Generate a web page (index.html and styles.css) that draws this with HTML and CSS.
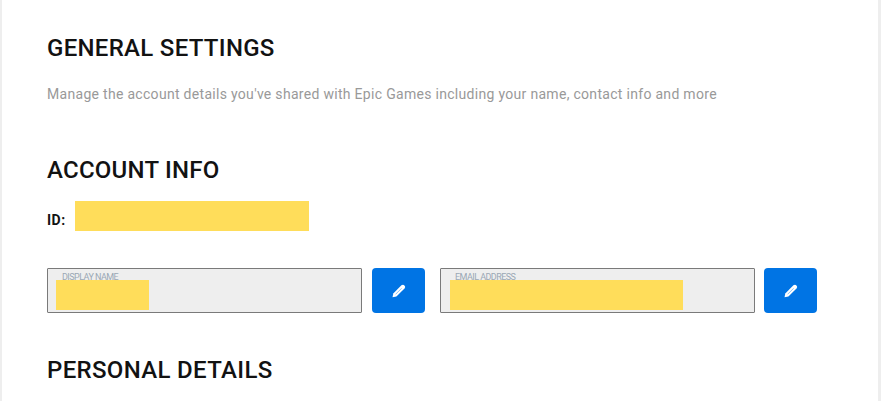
FILE: index.html
```html
<!DOCTYPE html>
<html lang="en">
<head>
    <meta charset="UTF-8">
    <meta name="viewport" content="width=device-width, initial-scale=1.0">
    <title>General Settings</title>
    <link rel="stylesheet" href="styles.css">
</head>
<body>
    <main class="settings">
        <h1 class="title title-general">General Settings</h1>
        <p class="description">Manage the account details you've shared with Epic Games including your name, contact info and more</p>

        <!-- Account info -->
        <h2 class="title title-account">Account Info</h2>
        <div class="account-id">
            <span class="id-label">ID:</span>
            <span class="hidden-value id-value"></span>
        </div>

        <div class="fields">
            <div class="field">
                <span class="field-label label-name">Display Name</span>
                <span class="hidden-value name-value"></span>
            </div>
            <button class="edit-button" aria-label="Edit display name">
                <svg width="14" height="14" viewBox="0 0 14 14">
                    <path d="M.5 13.3l.8-3.9L9.4 1.3q1.2-1.1 2.4-.4l1.1 1.1q.7 1.2-.4 2.4l-8.1 8.1z" fill="#fff"/>
                    <path d="M3.6 10.3l6-6" stroke="#0074e4" stroke-width=".8" opacity=".55"/>
                </svg>
            </button>
            <div class="field field-email">
                <span class="field-label label-email">Email Address</span>
                <span class="hidden-value email-value"></span>
            </div>
            <button class="edit-button edit-email" aria-label="Edit email address">
                <svg width="14" height="14" viewBox="0 0 14 14">
                    <path d="M.5 13.3l.8-3.9L9.4 1.3q1.2-1.1 2.4-.4l1.1 1.1q.7 1.2-.4 2.4l-8.1 8.1z" fill="#fff"/>
                    <path d="M3.6 10.3l6-6" stroke="#0074e4" stroke-width=".8" opacity=".55"/>
                </svg>
            </button>
        </div>

        <!-- Personal details -->
        <h2 class="title title-personal">Personal Details</h2>
    </main>
</body>
</html>
```
FILE: styles.css
```css
* {
    box-sizing: border-box;
}

body {
    margin: 0;
    background-color: #fff;
    color: #121212;
    font-family: Roboto, "Liberation Sans", sans-serif;
}

.settings {
    height: 401px;
    padding: 33px 0 0 45px;
    border-left: 2px solid #eee;
    border-right: 3px solid #eee;
    overflow: hidden;
}

.title {
    margin: 0;
    font-size: 24px;
    font-weight: 500;
    line-height: 30px;
    text-transform: uppercase;
    white-space: nowrap;
}

.title-general {
    letter-spacing: 0.3px;
}

.title-account {
    margin-top: 50px;
    letter-spacing: 0.25px;
}

.title-personal {
    margin-top: 42px;
    letter-spacing: 0.33px;
}

.description {
    margin: 21px 0 0;
    color: #999;
    font-size: 14px;
    line-height: 21px;
    letter-spacing: 0.3px;
    white-space: nowrap;
}

.account-id {
    display: flex;
    height: 30px;
    margin-top: 16px;
}

.id-label {
    width: 28px;
    padding-top: 9px;
    font-size: 14px;
    font-weight: 700;
    line-height: 20px;
    letter-spacing: 0.5px;
}

.hidden-value {
    display: block;
    height: 30px;
    background-color: #ffdd5a;
}

.id-value {
    width: 234px;
}

.fields {
    display: flex;
    margin-top: 37px;
}

.field {
    width: 315px;
    height: 45px;
    padding: 4px 8px 0;
    background-color: #eee;
    border: 1px solid #7a7a7a;
    border-radius: 1px;
}

.field-email {
    margin-left: 15px;
    padding-left: 9px;
}

.field-label {
    display: block;
    height: 7px;
    padding-left: 6px;
    color: #9aa8b5;
    font-size: 9px;
    line-height: 9px;
    letter-spacing: -0.55px;
    text-transform: uppercase;
    white-space: nowrap;
}

.label-email {
    padding-left: 5px;
}

.name-value {
    width: 93px;
}

.email-value {
    width: 233px;
}

.edit-button {
    display: flex;
    align-items: center;
    justify-content: center;
    width: 53px;
    height: 45px;
    margin-left: 10px;
    padding: 0;
    background-color: #0074e4;
    border: none;
    border-radius: 4px;
    cursor: pointer;
}

.edit-email {
    margin-left: 9px;
}
```
